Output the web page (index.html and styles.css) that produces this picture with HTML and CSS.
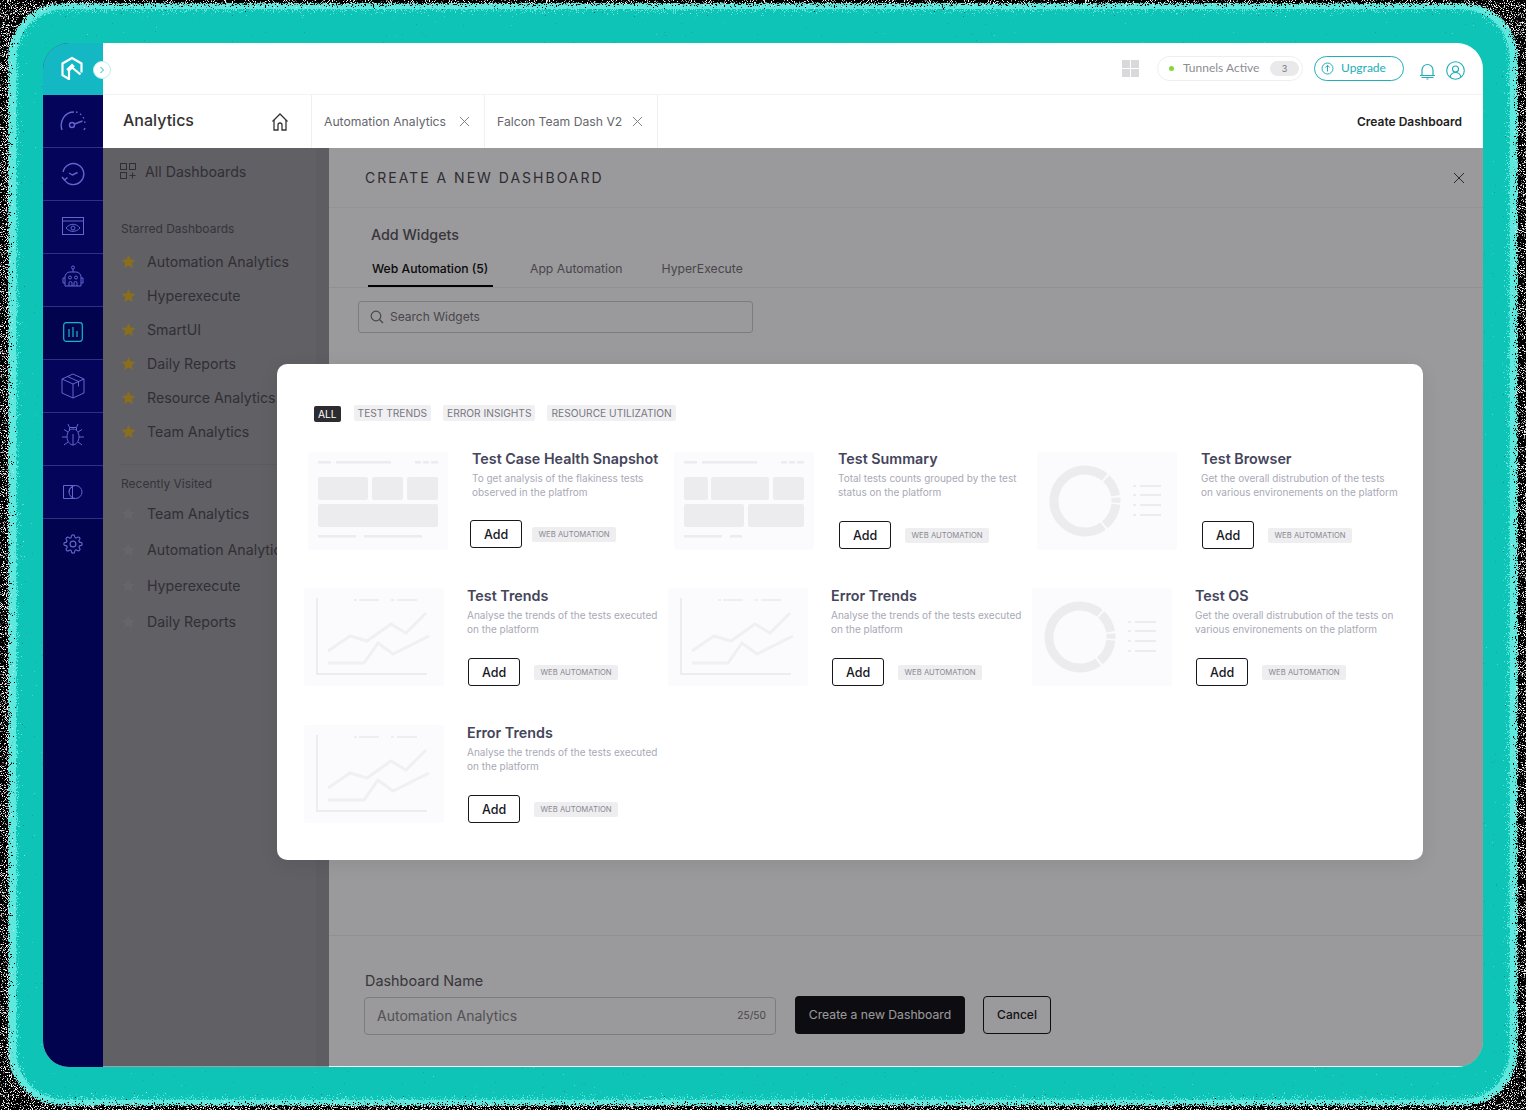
FILE: index.html
```html
<!DOCTYPE html>
<html lang="en">
<head>
    <meta charset="UTF-8">
    <title>Analytics - Create Dashboard</title>
    <link rel="stylesheet" href="styles.css">
</head>
<body>
    <!-- grainy glow behind the app window -->
    <svg class="backdrop" width="1526" height="1110" aria-hidden="true">
        <defs>
            <filter id="speckle" x="0" y="0" width="100%" height="100%">
                <feTurbulence type="fractalNoise" baseFrequency="0.95" numOctaves="2" seed="7"/>
                <feColorMatrix type="matrix" values="9 1 0 0 -5.600  9 1 0 0 -5.600  9 1 0 0 -5.600  0 0 0 0 1"/>
            </filter>
            <filter id="dissolve-wide" x="-5%" y="-5%" width="110%" height="110%">
                <feGaussianBlur in="SourceAlpha" stdDeviation="5" result="soft"/>
                <feTurbulence type="fractalNoise" baseFrequency="0.9" numOctaves="2" seed="3"/>
                <feColorMatrix type="matrix" values="0 0 0 0 0  0 0 0 0 0  0 0 0 0 0  1.6 0 0 0 -0.3" result="grain"/>
                <feComposite in="soft" in2="grain" operator="arithmetic" k1="0" k2="1" k3="1" k4="-0.5"/>
                <feComponentTransfer result="mask"><feFuncA type="linear" slope="14" intercept="-6.5"/></feComponentTransfer>
                <feComposite in="SourceGraphic" in2="mask" operator="in"/>
            </filter>
        </defs>
        <rect width="1526" height="1110" filter="url(#speckle)"/>
        <rect x="8" y="3" width="1510" height="1103" rx="54" fill="#5fe8dd" filter="url(#dissolve-wide)"/>
        <rect x="16" y="9" width="1494" height="1091" rx="48" fill="#10c4b6" filter="url(#dissolve-wide)"/>
    </svg>

    <svg class="defs" aria-hidden="true">
        <symbol id="star" viewBox="0 0 24 24"><path d="M12 1.500l3.200 7.200 7.800.8-5.900 5.200 1.700 7.700L12 18.400l-6.800 4 1.700-7.700L1 9.500l7.800-.8z" fill="currentColor"/></symbol>
        <symbol id="cross" viewBox="0 0 12 12"><path d="M1 1l10 10M11 1L1 11" fill="none" stroke="currentColor" stroke-width="1"/></symbol>

        <symbol id="thumb-tiles" viewBox="0 0 140 98">
            <rect width="140" height="98" rx="3" fill="#fbfbfd"/>
            <g fill="#ececee">
                <rect x="10" y="9" width="13" height="2.500"/><rect x="28" y="9" width="55" height="2.500"/>
                <rect x="107" y="9" width="6" height="2.500"/><rect x="115" y="9" width="6" height="2.500"/><rect x="123" y="9" width="7" height="2.500"/>
                <rect x="10" y="25" width="50" height="23" rx="2"/><rect x="64" y="25" width="31" height="23" rx="2"/><rect x="99" y="25" width="31" height="23" rx="2"/>
                <rect x="10" y="52" width="120" height="23" rx="2"/>
                <rect x="10" y="83" width="38" height="2.500"/><rect x="56" y="83" width="58" height="2.500"/>
            </g>
        </symbol>
        <symbol id="thumb-tiles-alt" viewBox="0 0 140 98">
            <rect width="140" height="98" rx="3" fill="#fbfbfd"/>
            <g fill="#ececee">
                <rect x="10" y="9" width="13" height="2.500"/><rect x="28" y="9" width="55" height="2.500"/>
                <rect x="107" y="9" width="6" height="2.500"/><rect x="115" y="9" width="6" height="2.500"/><rect x="123" y="9" width="7" height="2.500"/>
                <rect x="10" y="25" width="24" height="23" rx="2"/><rect x="37" y="25" width="58" height="23" rx="2"/><rect x="99" y="25" width="31" height="23" rx="2"/>
                <rect x="10" y="52" width="60" height="23" rx="2"/><rect x="74" y="52" width="56" height="23" rx="2"/>
                <rect x="10" y="83" width="38" height="2.500"/><rect x="56" y="83" width="12" height="2.500"/>
            </g>
        </symbol>
        <symbol id="thumb-lines" viewBox="0 0 140 98">
            <rect width="140" height="98" rx="3" fill="#fbfbfd"/>
            <path d="M13 10v76h110" fill="none" stroke="#e9e9ec" stroke-width="1.500"/>
            <g fill="#eeeef0">
                <rect x="50" y="11" width="3" height="2"/><rect x="55" y="11" width="20" height="2"/>
                <rect x="87" y="11" width="3" height="2"/><rect x="93" y="11" width="20" height="2"/>
            </g>
            <path d="M24 63l22-15 17 5 24-17 15 9 20-20M24 75h36l14-20 15 11 36-18" fill="none" stroke="#f0f0f2" stroke-width="3"/>
        </symbol>
        <symbol id="thumb-donut" viewBox="0 0 140 98">
            <rect width="140" height="98" rx="3" fill="#fbfbfd"/>
            <circle cx="48" cy="49" r="31" fill="none" stroke="#ececee" stroke-width="9" stroke-dasharray="24 2 138 2 20 2 5 2" transform="rotate(6 48 49)"/>
            <g fill="#ececee">
                <rect x="96" y="33" width="3" height="2"/><rect x="103" y="33" width="21" height="2"/>
                <rect x="96" y="42" width="3" height="2"/><rect x="103" y="42" width="21" height="2"/>
                <rect x="96" y="52" width="3" height="2"/><rect x="103" y="52" width="21" height="2"/>
                <rect x="96" y="62" width="3" height="2"/><rect x="103" y="62" width="21" height="2"/>
            </g>
        </symbol>
    </svg>

    <div class="frame">
        <nav class="rail">
            <div class="rail-logo">
                <svg width="24" height="26" viewBox="0 0 24 26" fill="none" stroke="#fff" stroke-width="2.200">
                    <path d="M9 23l-6.500-3.800V7.500L12 2l9.500 5.500v9"/>
                    <path d="M9 24v-9.500l3-3 8.500 7"/>
                    <path d="M7 14l5-5 2 2"/>
                </svg>
            </div>
            <div class="rail-item">
                <svg width="28" height="24" viewBox="0 0 28 24" fill="none" stroke="currentColor" stroke-width="1.400">
                    <path d="M3 21C0 12 6 3 15 3"/>
                    <path stroke-dasharray="1.500 3" d="M17 3c5 1 9 6 9 12"/>
                    <circle cx="13" cy="16" r="2.500"/>
                    <path d="M15.500 15l8-3"/>
                    <path d="M26 19l-1 2"/>
                </svg>
            </div>
            <div class="rail-item">
                <svg width="24" height="24" viewBox="0 0 24 24" fill="none" stroke="currentColor" stroke-width="1.400">
                    <path d="M2 10a10.500 10.500 0 1 1 1 7"/>
                    <path d="M1 15l2.500 3 3-2.500"/>
                    <path d="M8 11l3.500 2 5-2.500"/>
                </svg>
            </div>
            <div class="rail-item rail-item-up1">
                <svg width="22" height="18" viewBox="0 0 22 18" fill="none" stroke="currentColor" stroke-width="1">
                    <rect x=".5" y=".5" width="21" height="17"/>
                    <path d="M.5 4h21"/>
                    <path d="M4 11c4-5 10-5 14 0-4 4.500-10 4.500-14 0z"/>
                    <circle cx="11" cy="11" r="2"/>
                </svg>
            </div>
            <div class="rail-item rail-item-up3">
                <svg width="24" height="24" viewBox="0 0 24 24" fill="none" stroke="currentColor" stroke-width="1">
                    <circle cx="12" cy="2.500" r="1.500"/>
                    <path d="M12 4v3"/>
                    <path d="M4 21v-9a5 5 0 0 1 5-5h6a5 5 0 0 1 5 5v9z"/>
                    <circle cx="9" cy="12.500" r="1.500"/><circle cx="15" cy="12.500" r="1.500"/>
                    <path d="M8 21v-3a1.500 1.500 0 0 1 3 0v3M13 21v-3a1.500 1.500 0 0 1 3 0v3"/>
                    <path d="M4 13H2v5h2M20 13h2v5h-2"/>
                </svg>
            </div>
            <div class="rail-item rail-item-active rail-item-up1">
                <svg width="20" height="20" viewBox="0 0 20 20" fill="none" stroke="currentColor" stroke-width="1.200">
                    <rect x=".7" y=".7" width="18.600" height="18.600" rx="2.500"/>
                    <path d="M6 7v8M10 5v10M14 9v6"/>
                </svg>
            </div>
            <div class="rail-item">
                <svg width="24" height="26" viewBox="0 0 24 26" fill="none" stroke="currentColor" stroke-width="1">
                    <path d="M12 1l11 5v14l-11 5-11-5V6z"/>
                    <path d="M1 6l11 5 11-5M12 11v14M6.500 3.500l11 5v5"/>
                </svg>
            </div>
            <div class="rail-item rail-item-up4">
                <svg width="22" height="24" viewBox="0 0 22 24" fill="none" stroke="currentColor" stroke-width="1">
                    <path d="M11 6c4 0 6 4 6 8s-3 8-6 8-6-4-6-8 2-8 6-8zM11 11v11"/>
                    <path d="M7.500 7.500V4.500L6 1M14.500 7.500V4.500L16 1M7.500 4.500h7"/>
                    <path d="M5 14H0M17 14h5M6 9L2 6.500M16 9l4-2.500M6 19l-4 3M16 19l4 3"/>
                </svg>
            </div>
            <div class="rail-item">
                <svg width="20" height="14" viewBox="0 0 20 14" fill="none" stroke="currentColor" stroke-width="1">
                    <path d="M6 .5H.5v13H6"/>
                    <circle cx="12.500" cy="7" r="6.500"/>
                    <path d="M6 .5h6M6 13.500h6M9.500 1v12M6 7a6 6 0 0 1 3.500-5.500"/>
                </svg>
            </div>
            <div class="rail-item rail-item-up2">
                <svg width="20" height="20" viewBox="0 0 24 24" fill="none" stroke="currentColor" stroke-width="1.400">
                    <circle cx="12" cy="12" r="3.500"/>
                    <path d="M19.400 15a1.650 1.650 0 0 0 .33 1.820l.06.06a2 2 0 1 1-2.830 2.830l-.06-.06a1.650 1.650 0 0 0-2.820 1.170V21a2 2 0 0 1-4 0v-.09a1.650 1.650 0 0 0-2.820-1.170l-.06.06a2 2 0 1 1-2.830-2.830l.06-.06A1.650 1.650 0 0 0 3.090 14H3a2 2 0 0 1 0-4h.09a1.650 1.650 0 0 0 1.170-2.820l-.06-.06a2 2 0 1 1 2.830-2.830l.06.06A1.650 1.650 0 0 0 10 3.090V3a2 2 0 0 1 4 0v.09a1.650 1.650 0 0 0 2.820 1.170l.06-.06a2 2 0 1 1 2.830 2.830l-.06.06A1.650 1.650 0 0 0 20.910 10H21a2 2 0 0 1 0 4h-.09a1.650 1.650 0 0 0-1.510 1z"/>
                </svg>
            </div>
        </nav>

        <div class="rail-toggle">
            <svg width="8" height="8" viewBox="0 0 8 8" fill="none" stroke="#14b8c4" stroke-width="1"><path d="M2.500 1l3 3-3 3"/></svg>
        </div>

        <div class="content">
            <header class="topbar">
                <div class="apps-icon"><span></span><span></span><span></span><span></span></div>
                <div class="tunnels">
                    <span class="tunnels-dot"></span>
                    <span class="tunnels-label">Tunnels Active</span>
                    <span class="tunnels-count">3</span>
                </div>
                <div class="upgrade">
                    <svg width="13" height="13" viewBox="0 0 13 13" fill="none" stroke="currentColor" stroke-width="1"><circle cx="6.500" cy="6.500" r="5.500"/><path d="M6.500 9.500v-6M4.300 5.500l2.200-2.200 2.200 2.200"/></svg>
                    <span>Upgrade</span>
                </div>
                <svg class="bell" width="17" height="18" viewBox="0 0 17 18" fill="none" stroke="currentColor" stroke-width="1.200">
                    <path d="M3 13V8a5.500 5.500 0 0 1 11 0v5"/><path d="M1 13.500h15"/><path d="M2.500 15.500h12"/><path d="M7.500 17h2"/>
                </svg>
                <svg class="user" width="19" height="19" viewBox="0 0 19 19" fill="none" stroke="currentColor" stroke-width="1.100">
                    <circle cx="9.500" cy="9.500" r="8.800"/><circle cx="9.500" cy="8" r="3"/><path d="M4 16c.8-3 3-4.500 5.500-4.500S14.200 13 15 16"/>
                </svg>
            </header>

            <div class="tabbar">
                <div class="tabbar-title">
                    <span>Analytics</span>
                    <svg width="18" height="18" viewBox="0 0 18 18" fill="none" stroke="#333" stroke-width="1.300">
                        <path d="M1.500 8.500L9 1l7.500 7.500"/><path d="M3 7v10h4v-5a2 2 0 0 1 4 0v5h4V7"/>
                    </svg>
                </div>
                <div class="tab">
                    <span>Automation Analytics</span>
                    <svg class="tab-close"><use href="#cross"/></svg>
                </div>
                <div class="tab">
                    <span>Falcon Team Dash V2</span>
                    <svg class="tab-close"><use href="#cross"/></svg>
                </div>
                <div class="tabbar-action">Create Dashboard</div>
            </div>

            <div class="workspace">
                <aside class="side">
                    <div class="side-all">
                        <svg width="16" height="16" viewBox="0 0 16 16" fill="none" stroke="currentColor" stroke-width="1">
                            <rect x=".5" y=".5" width="6" height="6"/><rect x="9.500" y=".5" width="6" height="6"/><rect x=".5" y="9.500" width="6" height="6"/>
                            <path d="M12.500 9.500v6M9.500 12.500h6"/>
                        </svg>
                        <span>All Dashboards</span>
                    </div>
                    <div class="side-heading side-heading-first">Starred Dashboards</div>
                    <ul class="side-list">
                        <li><svg class="star"><use href="#star"/></svg>Automation Analytics</li>
                        <li><svg class="star"><use href="#star"/></svg>Hyperexecute</li>
                        <li><svg class="star"><use href="#star"/></svg>SmartUI</li>
                        <li><svg class="star"><use href="#star"/></svg>Daily Reports</li>
                        <li><svg class="star"><use href="#star"/></svg>Resource Analytics</li>
                        <li><svg class="star"><use href="#star"/></svg>Team Analytics</li>
                    </ul>
                    <div class="side-heading side-heading-recent">Recently Visited</div>
                    <ul class="side-list side-list-recent">
                        <li><svg class="star"><use href="#star"/></svg>Team Analytics</li>
                        <li><svg class="star"><use href="#star"/></svg>Automation Analytics</li>
                        <li><svg class="star"><use href="#star"/></svg>Hyperexecute</li>
                        <li><svg class="star"><use href="#star"/></svg>Daily Reports</li>
                    </ul>
                </aside>

                <main class="main">
                    <div class="main-head">
                        <h1>CREATE A NEW DASHBOARD</h1>
                        <svg class="main-close"><use href="#cross"/></svg>
                    </div>
                    <div class="widgets">
                        <h2>Add Widgets</h2>
                        <div class="widget-tabs">
                            <span class="widget-tab widget-tab-on">Web Automation (5)</span>
                            <span class="widget-tab">App Automation</span>
                            <span class="widget-tab">HyperExecute</span>
                        </div>
                        <div class="search">
                            <svg width="14" height="14" viewBox="0 0 14 14" fill="none" stroke="currentColor" stroke-width="1.200"><circle cx="6" cy="6" r="4.800"/><path d="M9.500 9.500L13 13"/></svg>
                            <span>Search Widgets</span>
                        </div>
                    </div>
                    <div class="main-foot">
                        <label class="name-label">Dashboard Name</label>
                        <div class="name-row">
                            <div class="name-input">
                                <span>Automation Analytics</span>
                                <small>25/50</small>
                            </div>
                            <button class="btn-primary">Create a new Dashboard</button>
                            <button class="btn-cancel">Cancel</button>
                        </div>
                    </div>
                </main>
            </div>
        </div>

        <div class="overlay"></div>

        <section class="modal">
            <div class="filters">
                <span class="chip chip-on">ALL</span>
                <span class="chip">TEST TRENDS</span>
                <span class="chip">ERROR INSIGHTS</span>
                <span class="chip">RESOURCE UTILIZATION</span>
            </div>
            <div class="cards">
                <article class="card card-top card-first">
                    <svg class="thumb"><use href="#thumb-tiles"/></svg>
                    <div class="card-body">
                        <h3>Test Case Health Snapshot</h3>
                        <p>To get analysis of the flakiness tests observed in the platfrom</p>
                        <div class="card-actions"><button class="btn-add">Add</button><span class="tag">WEB AUTOMATION</span></div>
                    </div>
                </article>
                <article class="card card-top card-second">
                    <svg class="thumb"><use href="#thumb-tiles-alt"/></svg>
                    <div class="card-body">
                        <h3>Test Summary</h3>
                        <p>Total tests counts grouped by the test status on the platform</p>
                        <div class="card-actions"><button class="btn-add">Add</button><span class="tag">WEB AUTOMATION</span></div>
                    </div>
                </article>
                <article class="card card-top card-third">
                    <svg class="thumb"><use href="#thumb-donut"/></svg>
                    <div class="card-body">
                        <h3>Test Browser</h3>
                        <p>Get the overall distrubution of the tests on various environements on the platform</p>
                        <div class="card-actions"><button class="btn-add">Add</button><span class="tag">WEB AUTOMATION</span></div>
                    </div>
                </article>
                <article class="card">
                    <svg class="thumb"><use href="#thumb-lines"/></svg>
                    <div class="card-body">
                        <h3>Test Trends</h3>
                        <p>Analyse the trends of the tests executed on the platform</p>
                        <div class="card-actions"><button class="btn-add">Add</button><span class="tag">WEB AUTOMATION</span></div>
                    </div>
                </article>
                <article class="card">
                    <svg class="thumb"><use href="#thumb-lines"/></svg>
                    <div class="card-body">
                        <h3>Error Trends</h3>
                        <p>Analyse the trends of the tests executed on the platform</p>
                        <div class="card-actions"><button class="btn-add">Add</button><span class="tag">WEB AUTOMATION</span></div>
                    </div>
                </article>
                <article class="card">
                    <svg class="thumb"><use href="#thumb-donut"/></svg>
                    <div class="card-body">
                        <h3>Test OS</h3>
                        <p>Get the overall distrubution of the tests on various environements on the platform</p>
                        <div class="card-actions"><button class="btn-add">Add</button><span class="tag">WEB AUTOMATION</span></div>
                    </div>
                </article>
                <article class="card">
                    <svg class="thumb"><use href="#thumb-lines"/></svg>
                    <div class="card-body">
                        <h3>Error Trends</h3>
                        <p>Analyse the trends of the tests executed on the platform</p>
                        <div class="card-actions"><button class="btn-add">Add</button><span class="tag">WEB AUTOMATION</span></div>
                    </div>
                </article>
            </div>
        </section>
    </div>
</body>
</html>
```

FILE: styles.css
```css
* {
    margin: 0;
    padding: 0;
    box-sizing: border-box;
}

html, body {
    height: 100%;
}

body {
    background-color: #000;
    padding: 43px;
    font-family: Inter, "Liberation Sans", sans-serif;
    color: #333;
    overflow: hidden;
}

button {
    font-family: inherit;
    background: none;
    cursor: pointer;
}

ul {
    list-style: none;
}

.backdrop {
    position: absolute;
    left: 0;
    top: 0;
}

.defs {
    display: none;
}

/* app window */
.frame {
    position: relative;
    display: flex;
    width: 1440px;
    height: 1024px;
    background-color: #fff;
    border-radius: 26px;
    overflow: hidden;
}

/* left icon rail */
.rail {
    width: 60px;
    flex-shrink: 0;
    background-color: #02034f;
    display: flex;
    flex-direction: column;
}

.rail-logo {
    height: 52px;
    background-color: #14b8c4;
    display: flex;
    align-items: center;
    justify-content: center;
    padding-right: 2px;
}

.rail-item {
    height: 53px;
    flex-shrink: 0;
    background-color: #03045a;
    border-bottom: 1px solid #2f3180;
    display: flex;
    align-items: center;
    justify-content: center;
    color: #6267cc;
}

.rail-item:last-child {
    background-color: transparent;
    border-bottom: none;
}

.rail-item-active {
    background-color: #02034f;
    color: #14b8c4;
}

/* a few glyphs sit a little above the middle of their cell */
.rail-item-up1 {
    padding-bottom: 2px;
}

.rail-item-up2 {
    padding-bottom: 4px;
}

.rail-item-up3 {
    padding-bottom: 6px;
}

.rail-item-up4 {
    padding-bottom: 8px;
}

.rail-toggle {
    position: absolute;
    left: 50px;
    top: 18px;
    width: 18px;
    height: 18px;
    background-color: #fff;
    border: 1px solid #bfeaee;
    border-radius: 50%;
    display: flex;
    align-items: center;
    justify-content: center;
}

.content {
    flex: 1;
    min-width: 0;
    display: flex;
    flex-direction: column;
}

/* top bar */
.topbar {
    height: 52px;
    flex-shrink: 0;
    display: flex;
    align-items: center;
    padding: 0 18px 0 0;
    justify-content: flex-end;
    border-bottom: 1px solid #f2f2f3;
}

.apps-icon {
    display: grid;
    grid-template-columns: 8px 8px;
    gap: 1px;
    margin-right: 18px;
    margin-top: -1px;
}

.apps-icon span {
    height: 8px;
    background-color: #d9d8da;
}

.tunnels {
    width: 146px;
    height: 25px;
    border: 1px solid #eeeeef;
    border-radius: 13px;
    display: flex;
    align-items: center;
    padding-left: 11px;
    margin-right: 11px;
    font-family: Lato, sans-serif;
    font-size: 12px;
    color: #8d8d92;
    white-space: nowrap;
}

.tunnels-dot {
    width: 5px;
    height: 5px;
    flex-shrink: 0;
    border-radius: 50%;
    background-color: #86d63a;
    margin-right: 9px;
}

.tunnels-label {
    margin-top: -2px;
}

.tunnels-count {
    width: 29px;
    height: 15px;
    flex-shrink: 0;
    margin-left: auto;
    margin-right: 3px;
    border-radius: 8px;
    background-color: #e9e9ec;
    font-family: Inter, sans-serif;
    font-size: 9px;
    color: #77777c;
    display: flex;
    align-items: center;
    justify-content: center;
}

.upgrade {
    width: 90px;
    height: 25px;
    border: 1px solid #21adb9;
    border-radius: 13px;
    display: flex;
    align-items: center;
    padding-left: 6px;
    gap: 7px;
    color: #21adb9;
    font-family: Lato, sans-serif;
    font-size: 12px;
    margin-right: 15px;
}

.upgrade span {
    margin-top: -2px;
}

.bell, .user {
    color: #21adb9;
    margin-top: 4px;
}

.bell {
    margin-right: 10px;
}

/* tab row */
.tabbar {
    height: 53px;
    flex-shrink: 0;
    display: flex;
    align-items: center;
}

.tabbar-title {
    width: 209px;
    height: 100%;
    padding: 0 22px 0 20px;
    display: flex;
    align-items: center;
    justify-content: space-between;
    border-right: 1px solid #f0f0f1;
    font-size: 16px;
    font-weight: 500;
    color: #333;
}

.tabbar-title span {
    margin-top: -4px;
}

.tab {
    width: 173px;
    height: 100%;
    padding: 0 14px 0 12px;
    display: flex;
    align-items: center;
    justify-content: space-between;
    border-right: 1px solid #f0f0f1;
    font-size: 12.2px;
    color: #66666c;
}

.tab-close {
    width: 11px;
    height: 11px;
    color: #77777c;
}

.tabbar-action {
    margin-left: auto;
    padding-right: 21px;
    font-size: 12px;
    font-weight: 600;
    color: #222;
}

/* below the tabs */
.workspace {
    flex: 1;
    display: flex;
    min-height: 0;
}

.side {
    width: 226px;
    flex-shrink: 0;
    background-color: #a1a0a5;
    border-right: 13px solid #9c9ba0;
    padding: 13px 0 0 17px;
    color: #504f56;
    white-space: nowrap;
}

.side-all {
    display: flex;
    align-items: center;
    gap: 9px;
    font-size: 14.2px;
    height: 20px;
}

.side-heading {
    font-size: 12px;
    color: #58575e;
    margin-left: 1px;
}

.side-heading-first {
    margin-top: 40px;
    margin-bottom: 8px;
    line-height: 15px;
}

.side-heading-recent {
    margin-top: 16px;
    padding-top: 11px;
    margin-left: 0;
    padding-left: 1px;
    line-height: 15px;
    border-top: 1px solid #9a98a0;
    margin-bottom: 4px;
}

.side-list li {
    height: 34px;
    display: flex;
    align-items: center;
    gap: 11px;
    font-size: 14.2px;
    padding-left: 1px;
}

.side-list-recent li {
    height: 36px;
}

.star {
    width: 15px;
    height: 15px;
    color: #e6b82a;
    flex-shrink: 0;
}

.side-list-recent .star {
    color: #aaa8b0;
}

.main {
    flex: 1;
    min-width: 0;
    display: flex;
    flex-direction: column;
}

.main-head {
    height: 60px;
    flex-shrink: 0;
    padding: 0 18px 0 36px;
    display: flex;
    align-items: center;
    justify-content: space-between;
    border-bottom: 1px solid #f3f3f4;
}

.main-head h1 {
    font-size: 14px;
    font-weight: 400;
    letter-spacing: 2px;
    color: #4c4b52;
}

.main-close {
    width: 12px;
    height: 12px;
    color: #444;
}

.widgets {
    flex: 1;
    padding-top: 17px;
}

.widgets h2 {
    margin-left: 42px;
    font-size: 14.3px;
    font-weight: 500;
    line-height: 20px;
    color: #5c5b62;
}

.widget-tabs {
    display: flex;
    height: 35px;
    margin-top: 8px;
    padding-left: 39px;
    gap: 30px;
    border-bottom: 1px solid #f0f0f1;
}

.widget-tab {
    padding: 0 5px;
    font-size: 12.2px;
    line-height: 31px;
    color: #77767c;
    margin-right: -1px;
}

.widget-tab-on {
    width: 125px;
    height: 34px;
    padding: 0 4px;
    color: #111;
    font-weight: 500;
    border-bottom: 2px solid #000;
    margin-right: 2px;
    white-space: nowrap;
}

.search {
    width: 395px;
    height: 32px;
    margin: 13px 0 0 29px;
    border: 1px solid #cfced3;
    border-radius: 3px;
    display: flex;
    align-items: center;
    gap: 6px;
    padding: 0 0 1px 11px;
    font-size: 12px;
    color: #77767c;
}

.main-foot {
    height: 132px;
    flex-shrink: 0;
    padding: 35px 0 0 35px;
    border-top: 1px solid #f0f0f1;
}

.name-label {
    display: block;
    font-size: 14.4px;
    line-height: 20px;
    color: #5c5b62;
    margin-left: 1px;
}

.name-row {
    display: flex;
    align-items: flex-start;
    margin-top: 5px;
}

.name-input {
    width: 412px;
    height: 38px;
    margin-top: 1px;
    border: 1px solid #cfced3;
    border-radius: 4px;
    display: flex;
    align-items: center;
    justify-content: space-between;
    padding: 0 9px 2px 12px;
    font-size: 14px;
    color: #88878d;
}

.name-input small {
    font-size: 10.2px;
    color: #77767c;
}

.btn-primary {
    width: 170px;
    height: 38px;
    margin-left: 19px;
    padding-bottom: 2px;
    background-color: #14141a;
    border: none;
    border-radius: 4px;
    color: #fff;
    font-size: 12.2px;
}

.btn-cancel {
    width: 68px;
    height: 38px;
    margin-left: 18px;
    padding-bottom: 2px;
    border: 1px solid #14141a;
    border-radius: 4px;
    color: #222;
    font-size: 12px;
    font-weight: 500;
}

/* dim layer and the widget dialog over it */
.overlay {
    position: absolute;
    left: 60px;
    right: 0;
    top: 105px;
    bottom: 1px;
    background-color: rgba(2, 0, 5, 0.4);
}

.modal {
    position: absolute;
    left: 234px;
    top: 321px;
    width: 1146px;
    height: 496px;
    background-color: #fff;
    border-radius: 10px;
    padding: 41px 0 0 27px;
    box-shadow: 0 4px 20px rgba(0, 0, 0, 0.08);
}

.filters {
    display: flex;
    align-items: flex-start;
    gap: 12px;
    margin-left: 10px;
    height: 45px;
}

.chip {
    height: 16px;
    padding: 0 4px;
    border-radius: 2px;
    background-color: #f0f0f2;
    font-size: 10.2px;
    line-height: 17px;
    color: #77777f;
}

.chip-on {
    margin-top: 1px;
    background-color: #2b2b30;
    color: #fff;
    margin-right: 1px;
}

.cards {
    display: grid;
    grid-template-columns: repeat(3, 364px);
    grid-auto-rows: 137px;
}

.card {
    display: flex;
    align-items: flex-start;
}

.card-first {
    padding-left: 4px;
}

.card-second {
    padding-left: 6px;
}

.card-third {
    padding-left: 5px;
}

.thumb {
    width: 140px;
    height: 98px;
    flex-shrink: 0;
    margin-top: 1px;
    margin-right: 23px;
    filter: blur(0.4px);
}

.card-top .thumb {
    margin-top: 2px;
    margin-right: 24px;
}

.card-body {
    width: 203px;
    flex-shrink: 0;
}

.card-body h3 {
    font-size: 14.3px;
    font-weight: 600;
    line-height: 18px;
    color: #44455a;
    white-space: nowrap;
}

.card-body p {
    margin-top: 3px;
    height: 28px;
    font-size: 10px;
    line-height: 14px;
    color: #a9a9b6;
}

.card-third p {
    width: 198px;
}

.card-actions {
    display: flex;
    align-items: center;
    margin-top: 22px;
    margin-left: 1px;
    gap: 14px;
}

.card-first .card-actions {
    margin-top: 21px;
    margin-left: -2px;
    gap: 10px;
}

.btn-add {
    width: 52px;
    height: 28px;
    border: 1px solid #16161c;
    border-radius: 3px;
    font-size: 12.5px;
    font-weight: 500;
    color: #16161c;
}

.tag {
    height: 15px;
    padding: 0 6.5px;
    border-radius: 2px;
    background-color: #eeeef0;
    font-size: 7.7px;
    line-height: 15px;
    color: #88888f;
    white-space: nowrap;
}
```
